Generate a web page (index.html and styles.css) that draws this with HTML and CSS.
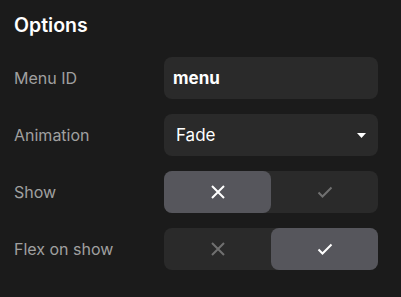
FILE: index.html
```html
<!doctype html>
<html lang="en">
    <head>
        <title>Options</title>
        <meta name="viewport" content="width=device-width, initial-scale=1"/>
        <link rel="stylesheet" href="styles.css">
    </head>
    <body>
        <div class="panel">
            <h1>Options</h1>
            <div class="row">
                <label>Menu ID</label>
                <div class="field field--text">menu</div>
            </div>
            <div class="row">
                <label>Animation</label>
                <div class="field field--select">
                    <span>Fade</span>
                    <svg class="caret" width="9" height="5" viewBox="0 0 9 5"><path d="M0 0h9L4.5 5z" fill="#fff"/></svg>
                </div>
            </div>
            <div class="row">
                <label>Show</label>
                <div class="toggle">
                    <div class="toggle__opt toggle__opt--on">
                        <svg width="14" height="14" viewBox="0 0 14 14"><path d="M1 1l12 12M13 1L1 13" stroke="#fff" stroke-width="2"/></svg>
                    </div>
                    <div class="toggle__opt">
                        <svg width="16" height="12" viewBox="0 0 16 12"><path d="M1.5 6.5l4 4 9-9" fill="none" stroke="#707070" stroke-width="2"/></svg>
                    </div>
                </div>
            </div>
            <div class="row">
                <label>Flex on show</label>
                <div class="toggle">
                    <div class="toggle__opt">
                        <svg width="14" height="14" viewBox="0 0 14 14"><path d="M1 1l12 12M13 1L1 13" stroke="#707070" stroke-width="2"/></svg>
                    </div>
                    <div class="toggle__opt toggle__opt--on">
                        <svg width="16" height="12" viewBox="0 0 16 12"><path d="M1.5 6.5l4 4 9-9" fill="none" stroke="#fff" stroke-width="2"/></svg>
                    </div>
                </div>
            </div>
        </div>
    </body>
</html>
```
FILE: styles.css
```css
html, body {
    margin: 0;
    background-color: #1b1b1b;
}
body {
    font-family: Inter, "Noto Sans", sans-serif;
    color: #fff;
}
.panel {
    padding: 13px 23px 0 14px;
}
h1 {
    margin: 0 0 20px;
    font-size: 19.5px;
    font-weight: 600;
    line-height: 24px;
}
.row {
    display: flex;
    align-items: center;
    height: 42px;
    margin-bottom: 15px;
}
.row label {
    width: 150px;
    color: #a0a0a0;
    font-size: 16px;
}
.field {
    flex: 1;
    height: 42px;
    box-sizing: border-box;
    background-color: #2a2a2a;
    border-radius: 8px;
    display: flex;
    align-items: center;
    padding: 0 12px 0 9px;
    font-size: 17px;
}
.field--text {
    font-weight: 700;
}
.field--select {
    justify-content: space-between;
    padding-left: 12px;
}
.toggle {
    flex: 1;
    height: 42px;
    display: flex;
    background-color: #2a2a2a;
    border-radius: 8px;
}
.toggle__opt {
    flex: 1;
    display: flex;
    align-items: center;
    justify-content: center;
    border-radius: 8px;
}
.toggle__opt--on {
    background-color: #56565c;
}
```
